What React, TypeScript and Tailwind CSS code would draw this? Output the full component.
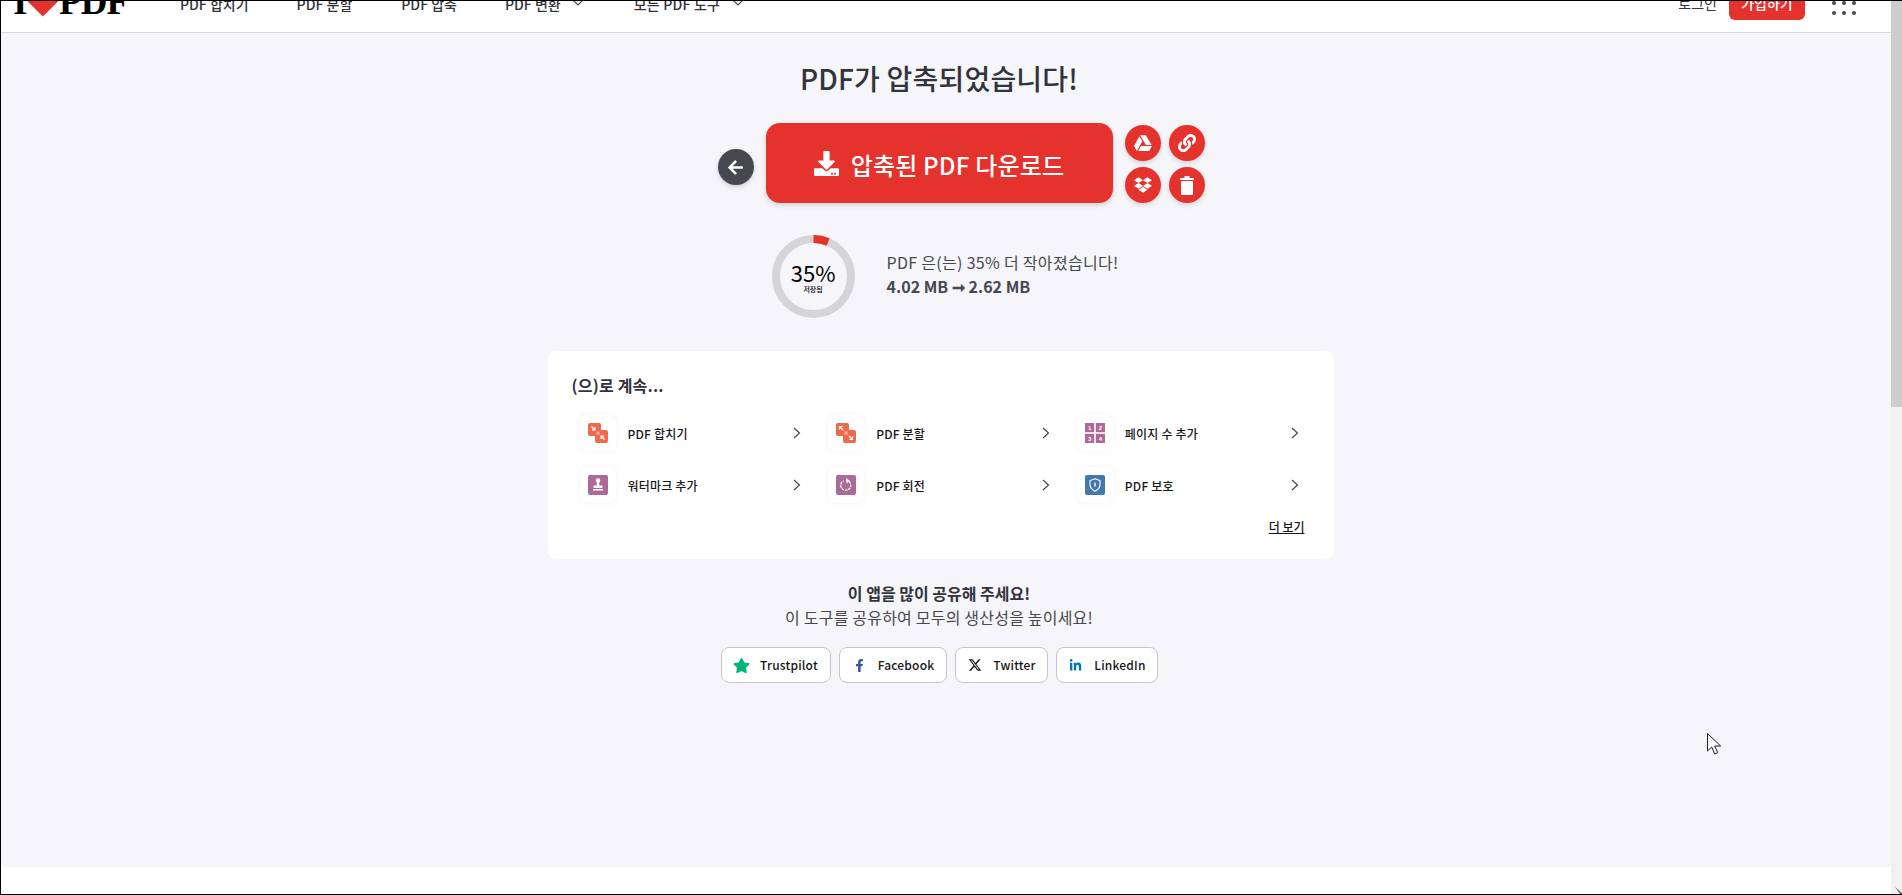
import { ReactNode } from "react";
import { FaArrowLeft, FaDownload, FaDropbox, FaFacebookF, FaGoogleDrive, FaLink, FaLinkedinIn, FaStar } from "react-icons/fa";
import { FaXTwitter } from "react-icons/fa6";

function MergeIcon({ split }: { split?: boolean }) {
  return (
    <svg width="20" height="20" viewBox="0 0 20 20">
      <rect x="0" y="0" width="13" height="13" rx="2" fill="#ee6a4e" />
      <rect x="7" y="7" width="13" height="13" rx="2" fill="#ee6a4e" />
      <rect x="8.5" y="8.5" width="3" height="3" fill="#f7b3a3" />
      {split ? (
        <path d="M7 7 3.500 3.500M3.500 6.500v-3h3M13 13l3.500 3.500M16.500 13.500v3h-3" stroke="#fff" strokeWidth="1.200" fill="none" />
      ) : (
        <path d="M3.500 3.500 7 7M7 4v3H4M16.500 16.500 13 13M13 16v-3h3" stroke="#fff" strokeWidth="1.200" fill="none" />
      )}
    </svg>
  );
}

function StampIcon() {
  return (
    <svg width="20" height="20" viewBox="0 0 20 20">
      <rect width="20" height="20" rx="2" fill="#ab6a97" />
      <circle cx="10" cy="5.500" r="2.300" fill="#fff" />
      <rect x="8.800" y="6" width="2.400" height="5" fill="#fff" />
      <rect x="5.500" y="10.500" width="9" height="2.500" rx=".8" fill="#fff" />
      <rect x="5" y="14" width="10" height="1.500" fill="#fff" />
    </svg>
  );
}

function RotateIcon() {
  return (
    <svg width="20" height="20" viewBox="0 0 20 20">
      <rect width="20" height="20" rx="2" fill="#ab6a97" />
      <path d="M13 6.500A5 5 0 1 1 7.500 5.800" stroke="#fff" strokeWidth="1.300" strokeDasharray="2.400 1" fill="none" />
      <path d="M10 3 13.800 5.800 10.500 8.500Z" fill="#fff" />
    </svg>
  );
}

function PagesIcon() {
  const cells = [
    { x: 0, y: 0, n: "1" },
    { x: 10.800, y: 0, n: "2" },
    { x: 0, y: 10.800, n: "3" },
    { x: 10.800, y: 10.800, n: "4" },
  ];
  return (
    <svg width="20" height="20" viewBox="0 0 20 20">
      {cells.map((c) => (
        <g key={c.n}>
          <rect x={c.x} y={c.y} width="9.200" height="9.200" fill="#ab6a97" />
          <text x={c.x + 4.600} y={c.y + 6.800} textAnchor="middle" fontSize="6" fontWeight="700" fill="#fff" fontFamily="'Liberation Sans', sans-serif">
            {c.n}
          </text>
        </g>
      ))}
    </svg>
  );
}

function ShieldIcon() {
  return (
    <svg width="20" height="20" viewBox="0 0 20 20">
      <rect width="20" height="20" rx="2" fill="#4478ab" />
      <path d="M10 3.800 15 5.600v4c0 3-2 5.200-5 6.600-3-1.400-5-3.600-5-6.600v-4Z" stroke="#fff" strokeWidth="1.100" fill="none" />
      <rect x="9.300" y="7.500" width="1.400" height="4" rx=".5" fill="#fff" />
    </svg>
  );
}

function TrashIcon() {
  return (
    <svg width="14" height="19" viewBox="0 0 14 19" fill="#fff">
      <rect x="4.500" y="0" width="5" height="2.500" />
      <rect x="0" y="2" width="14" height="2" />
      <rect x="1" y="5" width="12" height="14" rx="1" />
    </svg>
  );
}

const tools: { label: string; icon: ReactNode }[] = [
  { label: "PDF 합치기", icon: <MergeIcon /> },
  { label: "PDF 분할", icon: <MergeIcon split /> },
  { label: "페이지 수 추가", icon: <PagesIcon /> },
  { label: "워터마크 추가", icon: <StampIcon /> },
  { label: "PDF 회전", icon: <RotateIcon /> },
  { label: "PDF 보호", icon: <ShieldIcon /> },
];

const shares: { label: string; icon: ReactNode; w: string }[] = [
  { label: "Trustpilot", icon: <FaStar size={17} color="#00b67a" />, w: "w-[110px]" },
  { label: "Facebook", icon: <FaFacebookF size={13} color="#3b5998" />, w: "w-[108px]" },
  { label: "Twitter", icon: <FaXTwitter size={14} color="#161616" />, w: "w-[93px]" },
  { label: "LinkedIn", icon: <FaLinkedinIn size={13} color="#0077b5" />, w: "w-[102px]" },
];

function Chevron({ cls }: { cls: string }) {
  return (
    <svg className={cls} width="8" height="12" viewBox="0 0 8 12" fill="none">
      <path d="M1 1l5.500 5L1 11" stroke="#47474f" strokeWidth="1.200" />
    </svg>
  );
}

function NavDown() {
  return (
    <svg width="12" height="7" viewBox="0 0 12 7" fill="none" className="-mt-[3px]">
      <path d="M1 1l5 5 5-5" stroke="#47474f" strokeWidth="1.200" />
    </svg>
  );
}

function RoundAction({ children }: { children: ReactNode }) {
  return (
    <button className="flex h-9 w-9 items-center justify-center rounded-full bg-[#e5322d] text-white shadow-[0_2px_5px_rgba(0,0,0,0.15)]">
      {children}
    </button>
  );
}

function Header() {
  return (
    <header className="h-8 shrink-0 overflow-hidden border-b border-[#d9d9e3] bg-white">
      <div className="-mt-[8px] flex h-[22px] items-center pr-[35px] text-sm font-medium leading-[22px] text-[#33333b]">
        <div className="ml-[12px] flex w-[115px] items-center font-['Liberation_Serif',serif] text-[37px] font-black leading-[22px] text-black">
          <span className="-mt-[5px]">I</span>
          <svg width="38" height="26" viewBox="0 0 38 26" className="-ml-[1px] -mr-[1px] mt-[1px]">
            <path d="M19 26 2 9C-2 3 3-4 11-4c4 0 6 2 8 4 2-2 4-4 8-4 8 0 13 7 9 13Z" fill="#e5322d" />
          </svg>
          <span className="-mt-[5px] tracking-[-1px]">PDF</span>
        </div>
        <nav className="ml-[52px] flex items-center gap-[48px]">
          <a>PDF 합치기</a>
          <a>PDF 분할</a>
          <a className="ml-[1px]">PDF 압축</a>
          <a className="flex items-center gap-[11px]">PDF 변환 <NavDown /></a>
          <a className="ml-[2px] flex items-center gap-[12px] tracking-[0.2px]">모든 PDF 도구 <NavDown /></a>
        </nav>
        <div className="ml-auto mt-[4px] flex items-start">
          <a className="font-normal">로그인</a>
          <button className="ml-[12px] h-[28px] w-[76px] rounded-b-md bg-[#e5322d] text-sm font-medium leading-[22px] text-white">
            <span className="block -mt-[6px]">가입하기</span>
          </button>
          <div className="ml-[27px] -mt-[1px] grid grid-cols-3 gap-[6px]">
            {Array.from({ length: 9 }).map((_, i) => (
              <span key={i} className="h-1 w-1 rounded-full bg-[#47474f]" />
            ))}
          </div>
        </div>
      </div>
    </header>
  );
}

function Result() {
  return (
    <div className="ml-[12px] mt-8 flex items-center gap-[32px]">
      <div className="relative h-[83px] w-[83px]">
        <svg width="83" height="83" viewBox="0 0 83 83">
          <circle cx="41.500" cy="41.500" r="37.500" fill="none" stroke="#d5d5d8" strokeWidth="8" />
          <circle cx="41.500" cy="41.500" r="37.500" fill="none" stroke="#e5322d" strokeWidth="8" strokeDasharray="15 221" transform="rotate(-90 41.500 41.500)" />
        </svg>
        <div className="absolute inset-0 flex flex-col items-center justify-center text-black">
          <span className="text-[22px] font-normal leading-[26px]">35%</span>
          <span className="text-[7px] font-medium leading-[9px]">저장됨</span>
        </div>
      </div>
      <div className="mb-[5px] text-[#47474f]">
        <p className="text-base font-normal leading-6 tracking-[0.3px]">PDF 은(는) 35% 더 작아졌습니다!</p>
        <p className="text-base font-bold leading-6">4.02 MB ➞ 2.62 MB</p>
      </div>
    </div>
  );
}

function ContinueCard() {
  return (
    <section className="ml-[3px] mt-[33px] w-[786px] rounded-lg bg-white pb-[23px] pt-[22px]">
      <h2 className="pl-[24px] text-base font-bold leading-6 tracking-[0.2px] text-[#33333b]">(으)로 계속...</h2>
      <div className="mt-[18px] grid grid-cols-3 gap-x-[27px] gap-y-4 pl-[32px] pr-[35px]">
        {tools.map((t) => (
          <a key={t.label} className="flex h-9 items-center">
            <span className="flex h-9 w-9 items-center justify-center rounded-lg bg-white shadow-[0_0_6px_rgba(72,72,110,0.06)]">
              {t.icon}
            </span>
            <span className="ml-3 mt-[1px] text-xs font-medium tracking-[0.2px] text-[#161616]">{t.label}</span>
            <Chevron cls="ml-auto" />
          </a>
        ))}
      </div>
      <div className="mt-[15px] pr-[29px] text-right text-xs font-medium leading-[18px] text-[#161616]">
        <a className="underline">더 보기</a>
      </div>
    </section>
  );
}

function Share() {
  return (
    <div className="mt-[22px] flex flex-col items-center">
      <p className="text-base font-bold leading-6 text-[#33333b]">이 앱을 많이 공유해 주세요!</p>
      <p className="text-base font-normal leading-6 tracking-[0.2px] text-[#47474f]">이 도구를 공유하여 모두의 생산성을 높이세요!</p>
      <div className="mt-[18px] flex gap-2">
        {shares.map((s) => (
          <a key={s.label} className={`flex h-9 items-center justify-center gap-[10px] rounded-lg border border-[#c4c4d0] bg-white text-xs font-medium tracking-[0.2px] text-[#161616] ${s.w}`}>
            <span className="flex w-[17px] justify-center">{s.icon}</span>
            {s.label}
          </a>
        ))}
      </div>
    </div>
  );
}

export default function App() {
  return (
    <div className="relative flex h-[895px] w-full overflow-hidden border-y border-l border-black bg-white font-['Noto_Sans_CJK_KR','Noto_Sans',sans-serif]">
      <div className="flex min-w-0 flex-1 flex-col">
        <Header />
        <main className="flex flex-1 flex-col items-center bg-[#f5f5fa] pr-[14px] pt-[24px]">
          <h1 className="text-[28px] font-medium leading-[42px] tracking-[0.2px] text-[#33333b]">PDF가 압축되었습니다!</h1>
          <div className="mt-[24px] grid w-full grid-cols-[1fr_auto_1fr] items-center gap-3">
            <div className="flex justify-end">
              <button className="mt-[8px] flex h-9 w-9 items-center justify-center rounded-full bg-[#47474f] text-white shadow-[0_2px_5px_rgba(0,0,0,0.15)]">
                <FaArrowLeft size={17} />
              </button>
            </div>
            <button className="flex h-20 w-[347px] items-center justify-center gap-[12px] rounded-[14px] bg-[#e5322d] text-2xl font-medium tracking-[0.2px] text-white shadow-[0_2px_5px_rgba(0,0,0,0.15)]">
              <FaDownload size={25} />
              <span className="mt-[3px]">압축된 PDF 다운로드</span>
            </button>
            <div className="grid w-[80px] grid-cols-2 gap-x-2 gap-y-[6px] pt-[2px]">
              <RoundAction><FaGoogleDrive size={18} /></RoundAction>
              <RoundAction><FaLink size={18} /></RoundAction>
              <RoundAction><FaDropbox size={18} /></RoundAction>
              <RoundAction><TrashIcon /></RoundAction>
            </div>
          </div>
          <Result />
          <ContinueCard />
          <Share />
        </main>
        <div className="h-[27px] shrink-0 bg-white" />
      </div>
      <div className="relative w-[11px] shrink-0 bg-[#f0f0f0]">
        <div className="h-[406px] bg-[#cdcdcd]" />
        <svg className="absolute bottom-0 right-0" width="7" height="7" viewBox="0 0 7 7">
          <path d="M0 0 7 6V7H5Z" fill="#6b6b6b" />
        </svg>
      </div>
      <svg className="absolute left-[1706px] top-[732px]" width="16" height="25" viewBox="0 0 16 25">
        <path d="M.5.5V18l4.200-4 3 7 3-1.300-3-6.700h6Z" fill="#fff" stroke="#1c1c1c" strokeWidth="1" />
      </svg>
    </div>
  );
}
